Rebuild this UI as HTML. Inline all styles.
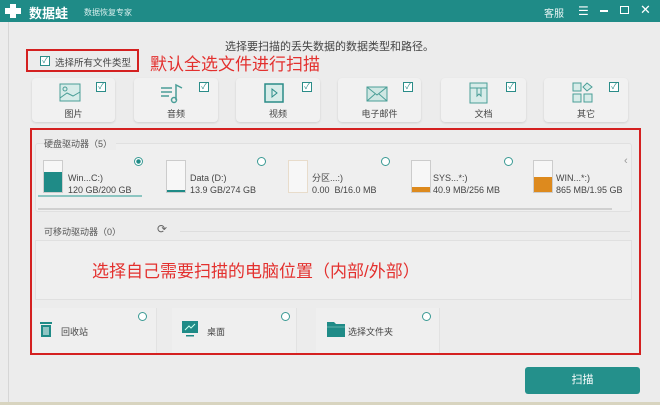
<!DOCTYPE html>
<html><head><meta charset="utf-8"><style>
*{margin:0;padding:0;box-sizing:border-box}
body{width:660px;height:405px;overflow:hidden;background:#ececec;font-family:"Liberation Sans","Noto Sans CJK SC",sans-serif;position:relative;color:#555}
.a{position:absolute}
.tb{left:0;top:0;width:660px;height:22px;background:#1f8b87}
.card{position:absolute;background:#f1f1f1;border-radius:4px;box-shadow:0 1px 2px rgba(0,0,0,.12)}
.cb{position:absolute;width:10px;height:10px;border:1px solid #2a8c88;background:#fff;font-size:8px;line-height:8px;text-align:center;color:#2a8c88}
.lbl{position:absolute;font-size:9px;color:#444;width:100%;text-align:center;top:29px}
.rad{position:absolute;width:9px;height:9px;border:1px solid #3a9a94;border-radius:50%;background:#fff}
.drv{position:absolute;width:20px;height:33px;border:1px solid #ccc;background:#f7f7f7}
.dt{position:absolute;font-size:9px;color:#444;line-height:12px}
.red{color:#e3302e;font-size:17px}
</style></head><body>
<div class="a tb"></div>
<div class="a" style="left:5px;top:4px;width:16px;height:14px">
<div class="a" style="left:5px;top:0;width:6px;height:14px;background:#fff"></div>
<div class="a" style="left:0;top:4px;width:16px;height:6px;background:#fff"></div></div>
<div class="a" style="left:29px;top:3px;color:#fff;font-size:13px;font-weight:bold">数据蛙</div>
<div class="a" style="left:84px;top:7px;color:#d8efee;font-size:8px">数据恢复专家</div>
<div class="a" style="left:544px;top:5px;color:#e8f5f4;font-size:10px">客服</div>
<div class="a" style="left:578px;top:4px;color:#fff;font-size:12px">☰</div>
<div class="a" style="left:600px;top:10px;width:8px;height:1.5px;background:#fff"></div>
<div class="a" style="left:620px;top:6px;width:9px;height:8px;border:1.5px solid #fff"></div>
<div class="a" style="left:640px;top:2px;color:#fff;font-size:13px">✕</div>
<div class="a" style="left:8px;top:22px;width:1px;height:383px;background:#d6d6d6"></div>
<div class="a" style="left:225px;top:38px;font-size:11px;color:#444">选择要扫描的丢失数据的数据类型和路径。</div>
<div class="a" style="left:26px;top:49px;width:113px;height:23px;border:2px solid #d42020"></div>
<div class="cb" style="left:40px;top:56px">✓</div>
<div class="a" style="left:55px;top:55px;font-size:9.5px;color:#444">选择所有文件类型</div>
<div class="a red" style="left:150px;top:50px">默认全选文件进行扫描</div>

<div class="card" style="left:32px;top:78px;width:83px;height:44px"><svg class="a" style="left:27px;top:5px" width="22" height="20"><rect x="1" y="1" width="20" height="17" fill="#d7ece9" stroke="#4a9e97"/><path d="M1 15 L8 10 L14 13 L21 9" stroke="#4a9e97" fill="none"/><circle cx="6" cy="6" r="2" fill="none" stroke="#4a9e97"/></svg><div class="cb" style="left:64px;top:4px">✓</div><div class="lbl">图片</div></div>
<div class="card" style="left:134px;top:78px;width:84px;height:44px"><svg class="a" style="left:26px;top:4px" width="24" height="22"><path d="M1 6H12M1 10H12M1 14H9" stroke="#4a9e97" stroke-width="1.5"/><path d="M16 18V3L22 6" stroke="#4a9e97" fill="none" stroke-width="1.5"/><circle cx="14" cy="18" r="2.5" fill="none" stroke="#4a9e97" stroke-width="1.5"/></svg><div class="cb" style="left:65px;top:4px">✓</div><div class="lbl">音频</div></div>
<div class="card" style="left:236px;top:78px;width:84px;height:44px"><svg class="a" style="left:28px;top:5px" width="20" height="20"><rect x="1" y="1" width="18" height="18" fill="#d7ece9" stroke="#2a8c88" stroke-width="1.5"/><path d="M8 6 L13 10 L8 14Z" fill="none" stroke="#2a8c88"/></svg><div class="cb" style="left:66px;top:4px">✓</div><div class="lbl">视频</div></div>
<div class="card" style="left:338px;top:78px;width:83px;height:44px"><svg class="a" style="left:28px;top:6px" width="22" height="18"><rect x="1" y="3" width="20" height="14" fill="#cfe7e3" stroke="#4a9e97"/><path d="M1 3 L11 11 L21 3 M1 17 L9 10 M21 17 L13 10" stroke="#4a9e97" fill="none"/></svg><div class="cb" style="left:65px;top:4px">✓</div><div class="lbl">电子邮件</div></div>
<div class="card" style="left:441px;top:78px;width:85px;height:44px"><svg class="a" style="left:28px;top:4px" width="20" height="22"><rect x="1" y="1" width="17" height="20" fill="#d7ece9" stroke="#4a9e97"/><path d="M1 6 H18 M8 6 V14 L10 12 L12 14 V6" stroke="#4a9e97" fill="none"/></svg><div class="cb" style="left:65px;top:4px">✓</div><div class="lbl">文档</div></div>
<div class="card" style="left:544px;top:78px;width:84px;height:44px"><svg class="a" style="left:28px;top:4px" width="22" height="22"><rect x="1" y="1" width="8" height="8" fill="#d7ece9" stroke="#4a9e97"/><path d="M15 1 L20 5 L15 9 L11 5Z" fill="#d7ece9" stroke="#4a9e97"/><rect x="1" y="12" width="8" height="8" fill="#d7ece9" stroke="#4a9e97"/><rect x="12" y="12" width="8" height="8" fill="#d7ece9" stroke="#4a9e97"/></svg><div class="cb" style="left:65px;top:4px">✓</div><div class="lbl">其它</div></div>

<div class="a" style="left:30px;top:128px;width:611px;height:227px;border:2px solid #d42020"></div>
<div class="a" style="left:35px;top:143px;width:597px;height:69px;border:1px solid #e0e0e0;border-radius:3px;background:#efefef"></div>
<div class="a" style="left:44px;top:137px;font-size:9px;color:#555;background:#ececec;padding-right:4px">硬盘驱动器（5）</div>

<div class="drv" style="left:43px;top:160px"><div class="a" style="left:0;bottom:0;width:18px;height:20px;background:#1f8b87"></div></div>
<div class="dt" style="left:68px;top:172px">Win...C:)<br>120 GB/200 GB</div>
<div class="rad" style="left:134px;top:157px;background:radial-gradient(#1f8b87 40%,#fff 50%)"></div>
<div class="a" style="left:38px;top:195px;width:104px;height:2px;background:#8cc5c1"></div>

<div class="drv" style="left:166px;top:160px"><div class="a" style="left:0;bottom:0;width:18px;height:2px;background:#1f8b87"></div></div>
<div class="dt" style="left:190px;top:172px">Data (D:)<br>13.9 GB/274 GB</div>
<div class="rad" style="left:257px;top:157px"></div>

<div class="drv" style="left:288px;top:160px;border-color:#e8dccb"></div>
<div class="dt" style="left:312px;top:172px">分区...:)<br>0.00&nbsp; B/16.0 MB</div>
<div class="rad" style="left:381px;top:157px"></div>

<div class="drv" style="left:411px;top:160px"><div class="a" style="left:0;bottom:0;width:18px;height:5px;background:#dd8a1e"></div></div>
<div class="dt" style="left:433px;top:172px">SYS...*:)<br>40.9 MB/256 MB</div>
<div class="rad" style="left:504px;top:157px"></div>

<div class="drv" style="left:533px;top:160px"><div class="a" style="left:0;bottom:0;width:18px;height:15px;background:#dd8a1e"></div></div>
<div class="dt" style="left:556px;top:172px">WIN...*:)<br>865 MB/1.95 GB</div>
<div class="a" style="left:624px;top:155px;font-size:11px;color:#999">‹</div>
<div class="a" style="left:38px;top:208px;width:574px;height:2px;background:#d0d0d0"></div>

<div class="a" style="left:44px;top:225px;font-size:9px;color:#555">可移动驱动器（0）</div>
<div class="a" style="left:157px;top:222px;font-size:12px;color:#666">⟳</div>
<div class="a" style="left:180px;top:231px;width:450px;height:1px;background:#ddd"></div>
<div class="a" style="left:35px;top:240px;width:597px;height:60px;border:1px solid #e0e0e0;background:#efefef"></div>
<div class="a red" style="left:92px;top:257px">选择自己需要扫描的电脑位置（内部/外部）</div>

<div class="a" style="left:33px;top:308px;width:124px;height:45px;background:#efefef;border-right:1px solid #e2e2e2"></div>
<svg class="a" style="left:40px;top:321px" width="12" height="16"><rect x="0" y="1" width="12" height="2" fill="#1f8b87"/><rect x="1" y="4" width="10" height="12" fill="#1f8b87"/><path d="M4 6V14M6 6V14M8 6V14" stroke="#fff"/></svg>
<div class="a" style="left:61px;top:325px;font-size:9px;color:#444">回收站</div>
<div class="rad" style="left:138px;top:312px"></div>
<div class="a" style="left:172px;top:308px;width:125px;height:45px;background:#efefef;border-right:1px solid #e2e2e2"></div>
<svg class="a" style="left:182px;top:321px" width="16" height="16"><rect x="0" y="0" width="16" height="12" fill="#1f8b87"/><path d="M3 9 L7 5 L9 7 L13 3" stroke="#cfe" fill="none"/><rect x="4" y="14" width="8" height="1.5" fill="#1f8b87"/></svg>
<div class="a" style="left:207px;top:325px;font-size:9px;color:#444">桌面</div>
<div class="rad" style="left:281px;top:312px"></div>
<div class="a" style="left:316px;top:308px;width:124px;height:45px;background:#efefef;border-right:1px solid #e2e2e2"></div>
<svg class="a" style="left:327px;top:322px" width="18" height="15"><path d="M0 0H7L9 2H18V15H0Z" fill="#1f8b87"/><path d="M0 5H18" stroke="#5fb0ab"/></svg>
<div class="a" style="left:348px;top:325px;font-size:9px;color:#444">选择文件夹</div>
<div class="rad" style="left:422px;top:312px"></div>

<div class="a" style="left:525px;top:367px;width:115px;height:27px;background:#24908b;border-radius:3px;color:#fff;font-size:11px;text-align:center;line-height:27px">扫描</div>
<div class="a" style="left:0;top:402px;width:660px;height:3px;background:#d8d4bf"></div>
</body></html>
